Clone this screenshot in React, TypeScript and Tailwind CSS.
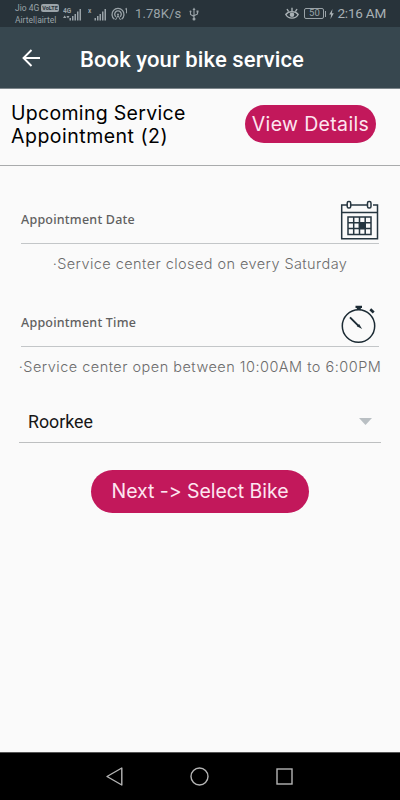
import React from 'react';

function SignalBars({ label, dotted }: { label: string; dotted?: boolean }) {
  return (
    <svg width="20" height="16" viewBox="0 0 20 16" fill="#9aa3a8">
      <text x="0" y="7" fontSize="6.500" fontWeight="700" fontFamily="Roboto, sans-serif">
        {label}
      </text>
      {dotted && <path d="M0 12l1.700-2.500 1.700 2.500zM3.500 10h3l-1.500 2.500z" />}
      <rect x="6.500" y="12" width="1.500" height="2.500" />
      <rect x="9" y="10" width="1.500" height="4.500" />
      <rect x="11.500" y="8" width="1.500" height="6.500" />
      <rect x="14" y="5.500" width="1.500" height="9" />
      <rect x="16.500" y="3" width="1.500" height="11.500" />
    </svg>
  );
}

function HotspotIcon() {
  return (
    <svg width="18" height="16" viewBox="0 0 18 16" fill="none" stroke="#9aa3a8" strokeWidth="1.300">
      <path d="M3.400 13.200a6 6 0 1 1 7.200 0" />
      <path d="M5 10.800a3.300 3.300 0 1 1 4 0" />
      <circle cx="7" cy="8.500" r="1" fill="#9aa3a8" stroke="none" />
      <path d="M4.500 14L7 9.500 9.500 14" strokeWidth="1" />
      <path d="M14.200 3.200l1.300-.9v5" strokeWidth="1" />
    </svg>
  );
}

function UsbIcon() {
  return (
    <svg width="10" height="14" viewBox="0 0 10 14" fill="none" stroke="#9aa3a8" strokeWidth="1.100">
      <path d="M5 2v9M1.500 5v2.500L5 9.500M8.500 5v2L5 8.800" />
      <path d="M3.500 3L5 .5 6.500 3z" fill="#9aa3a8" stroke="none" />
      <circle cx="5" cy="12" r="1.500" fill="#9aa3a8" stroke="none" />
      <circle cx="1.500" cy="4.500" r="1" fill="#9aa3a8" stroke="none" />
      <rect x="7.500" y="3.500" width="2" height="2" fill="#9aa3a8" stroke="none" />
    </svg>
  );
}

function EyeIcon() {
  return (
    <svg width="14" height="13" viewBox="0 0 14 13" fill="none" stroke="#a9b1b5" strokeWidth="1.400">
      <path d="M.8 7.500C3.500 3.700 10.500 3.700 13.200 7.500 10.500 12.300 3.500 12.300 .8 7.500z" />
      <circle cx="7" cy="7.700" r="2.300" fill="#a9b1b5" stroke="none" />
      <path d="M7 4V.8M3.600 4.600L2 2M10.400 4.600L12 2" />
    </svg>
  );
}

function CalendarIcon() {
  return (
    <svg width="39" height="40" viewBox="0 0 39 40" fill="none" stroke="#263640" strokeWidth="1.500">
      <path d="M7 5H1.700v33.800h35.800V5h-4.500M11 5h17M1.700 12.500h35.800" />
      <rect x="7.200" y="1.500" width="3.500" height="6.500" rx="1.500" />
      <rect x="27.500" y="1.500" width="3.500" height="6.500" rx="1.500" />
      <path d="M8 17h23v17.500H8zM8 22.800h23M8 28.600h23M13.700 17v17.500M19.500 17v17.500M25.200 17v17.500" />
      <rect x="19.500" y="22.800" width="5.700" height="5.800" fill="#263640" />
    </svg>
  );
}

function StopwatchIcon() {
  return (
    <svg width="36" height="38" viewBox="0 0 36 38" fill="none" stroke="#1c2b34">
      <circle cx="17.500" cy="21" r="16.200" strokeWidth="1.500" />
      <path d="M14.500 1.900h6.500M15.800 3.700h4" strokeWidth="2.200" />
      <path d="M29.300 4.200l3.400 3.200" strokeWidth="2.700" />
      <path d="M9 12.300l8.500 8.500" strokeWidth="1.900" />
      <path d="M15.800 21.300l2.300-2.300 3 5z" fill="#1c2b34" stroke="none" />
    </svg>
  );
}

function StatusBar() {
  return (
    <div className="flex h-[27px] items-center bg-[#28333a] pl-[15px] pr-[14px] font-[Roboto,sans-serif] text-[#9aa3a8]">
      <div className="w-[45px] shrink-0 whitespace-nowrap pt-[1px] text-[8.500px] leading-[12px]">
        <div className="flex items-center gap-[2px]">
          <span>Jio 4G</span>
          <span className="rounded-[2px] bg-[#9aa3a8] px-[1px] text-[5.500px] font-bold leading-[8px] text-[#28333a]">
            VoLTE
          </span>
        </div>
        <div>Airtel|airtel</div>
      </div>
      <div className="ml-[3px] shrink-0">
        <SignalBars label="4G" dotted />
      </div>
      <div className="ml-[5px] shrink-0">
        <SignalBars label=" x" />
      </div>
      <div className="ml-[3px] shrink-0">
        <HotspotIcon />
      </div>
      <span className="ml-[6px] text-[13px] tracking-[0.1px]">1.78K/s</span>
      <span className="ml-2">
        <UsbIcon />
      </span>
      <div className="ml-auto flex items-center">
        <EyeIcon />
        <div className="ml-[5px] flex h-[11px] w-[20px] items-center justify-center rounded-[2px] border border-[#9aa3a8] text-[9.500px]">
          50
        </div>
        <div className="ml-[1px] h-[6px] w-[1px] bg-[#9aa3a8]" />
        <svg className="ml-[3px]" width="5" height="10" viewBox="0 0 5 10" fill="#a9b1b5">
          <path d="M3.500 0L.2 5.500h1.900L1.500 10l3.300-5.800H2.900z" />
        </svg>
        <span className="ml-[3px] text-[13.500px] tracking-[-0.2px] text-[#a9b1b5]">2:16 AM</span>
      </div>
    </div>
  );
}

type FieldProps = {
  label: string;
  icon: React.ReactNode;
};

function Field({ label, icon }: FieldProps) {
  return (
    <div className="mx-[21px] flex h-[46px] items-end justify-between border-b border-[#c3c6c8]">
      <span className="pb-[15px] font-['Noto_Sans',sans-serif] text-[12.500px] font-medium leading-[17px] tracking-[0.22px] text-[#606060]">
        {label}
      </span>
      {icon}
    </div>
  );
}

export default function App() {
  return (
    <div className="flex h-[800px] w-[400px] flex-col overflow-hidden bg-[#fafafa] font-[Inter,sans-serif] [font-feature-settings:'calt'_0]">
      <StatusBar />

      <header className="flex h-[62px] items-center border-b border-[#7d868b] bg-[#37474f] pl-[22px] text-white">
        <svg width="18" height="18" viewBox="0 0 18 18" fill="none" stroke="white" strokeWidth="1.900">
          <path d="M18 9H1.500M9.500 1L1.500 9l8 8" />
        </svg>
        <h1 className="ml-[40px] pt-[3px] font-[Roboto,sans-serif] text-[22px] font-medium tracking-[0.1px]">
          Book your bike service
        </h1>
      </header>

      <section className="flex h-[77px] items-start justify-between border-b border-[#a9abac] pl-[11px] pr-[24px]">
        <p className="whitespace-nowrap pt-[13px] text-[19.500px] leading-[23px] tracking-[0.3px] text-black">
          Upcoming Service
          <br />
          <span className="tracking-[0.500px]">Appointment (2)</span>
        </p>
        <button className="mt-4 h-[38px] w-[131px] whitespace-nowrap rounded-full bg-[#c2185b] pt-[2px] text-[19.500px] tracking-[0.35px] text-[#fde6f0]">
          View Details
        </button>
      </section>

      <main className="flex flex-1 flex-col">
        <div className="mt-[32px]">
          <Field
            label="Appointment Date"
            icon={
              <span className="pb-[3px]">
                <CalendarIcon />
              </span>
            }
          />
        </div>
        <p className="mt-[10px] whitespace-nowrap text-center text-[14.500px] font-light leading-5 tracking-[0.43px] text-[#6c6c6c]">
          ·Service center closed on every Saturday
        </p>

        <div className="mt-[27px]">
          <Field
            label="Appointment Time"
            icon={
              <span className="pb-[3px] pr-[2px]">
                <StopwatchIcon />
              </span>
            }
          />
        </div>
        <p className="mt-[10px] whitespace-nowrap text-center text-[14.500px] font-light leading-5 tracking-[0.48px] text-[#6c6c6c]">
          ·Service center open between 10:00AM to 6:00PM
        </p>

        <div className="mx-[19px] mt-[25px] flex h-[41px] items-center justify-between border-b border-[#bdbfc0] pl-[9px] pr-[9px]">
          <span className="font-[Roboto,sans-serif] text-[17.800px] text-[#161616]">Roorkee</span>
          <svg className="mb-[1px]" width="13" height="7" viewBox="0 0 13 7" fill="#b9bfc3">
            <path d="M0 0h13L6.500 7z" />
          </svg>
        </div>

        <button className="mt-[27px] h-[43px] w-[218px] self-center whitespace-nowrap rounded-full bg-[#c2185b] pt-[1px] text-[19.500px] tracking-[-0.050px] text-[#fde6f0]">
          Next -&gt; Select Bike
        </button>
      </main>

      <nav className="flex h-[48px] items-center justify-between border-t border-[#555] bg-black pl-[106px] pr-[107px]">
        <svg width="17" height="19" viewBox="0 0 17 19" fill="none" stroke="#b5b5b5" strokeWidth="1.400">
          <path d="M15.800 1v17L1 9.500z" strokeLinejoin="round" />
        </svg>
        <svg width="19" height="19" viewBox="0 0 19 19" fill="none" stroke="#b5b5b5" strokeWidth="1.400">
          <circle cx="9.500" cy="9.500" r="8.500" />
        </svg>
        <svg width="17" height="17" viewBox="0 0 17 17" fill="none" stroke="#b5b5b5" strokeWidth="1.400">
          <rect x="1" y="1" width="15" height="15" />
        </svg>
      </nav>
    </div>
  );
}
